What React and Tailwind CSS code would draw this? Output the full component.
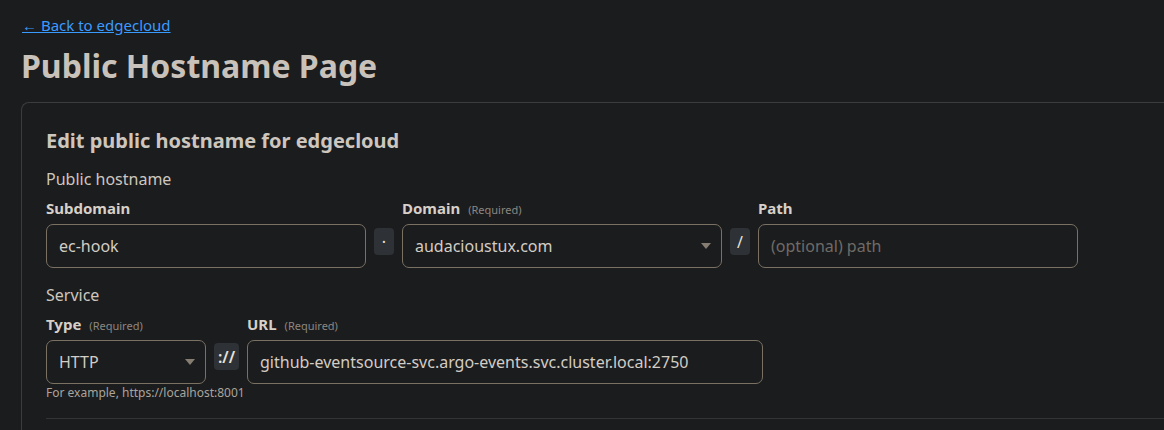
import React from 'react'

const Sep = ({ children, w = 'w-[20px]', mb = 'mb-[13px]', bold }) => (
  <div className={`${w} h-[27px] ${mb} shrink-0 rounded-[4px] bg-[#2e3135] flex items-center justify-center text-[#e6e2dc] text-[16px] ${bold ? 'font-semibold' : 'font-normal'}`}>
    {children}
  </div>
)

const Label = ({ children, required }) => (
  <div className="h-[27px] flex items-baseline gap-[8px]">
    <span className="text-[15px] font-bold text-[#d6d0c8]">{children}</span>
    {required && <span className="text-[11px] text-[#8c8780]">(Required)</span>}
  </div>
)

const Chevron = () => (
  <svg width="10" height="6" viewBox="0 0 10 6" className="absolute right-[10px] top-1/2 -translate-y-1/2">
    <path d="M0 0H10L5 6Z" fill="#857d72" />
  </svg>
)

const Box = ({ w, children, select, placeholder }) => (
  <div className={`${w} h-[44px] relative rounded-[7px] border border-[#7a7163] flex items-center px-[12px] text-[16px] ${placeholder ? 'text-[#6f6b66]' : 'text-[#d3cdc5]'}`}>
    {children}
    {select && <Chevron />}
  </div>
)

export default function App() {
  return (
    <div className="h-[430px] overflow-hidden bg-[#1b1c1e] pl-[21px] pt-[14px]" style={{ fontFamily: '"Noto Sans", sans-serif' }}>
      <a href="#" className="block ml-[1px] text-[15px] leading-[22px] text-[#3a9bff] underline">
        ← Back to edgecloud
      </a>
      <h1 className="mt-[8px] text-[32px] leading-[44px] font-bold text-[#c9c2ba]">Public Hostname Page</h1>

      <div className="mt-[14px] mr-[-24px] border-l border-t border-[#3c3c3e] rounded-tl-[8px] pl-[24px] pt-[24px]">
        <h2 className="text-[20px] leading-[28px] font-bold text-[#cdc6be]">Edit public hostname for edgecloud</h2>

        <div className="mt-[12px] text-[16px] leading-[24px] text-[#cdc7bf]">Public hostname</div>
        <div className="mt-[6px] flex items-end gap-[8px]">
          <div>
            <Label>Subdomain</Label>
            <Box w="w-[320px]">ec-hook</Box>
          </div>
          <Sep>·</Sep>
          <div>
            <Label required>Domain</Label>
            <Box w="w-[320px]" select>audacioustux.com</Box>
          </div>
          <Sep>/</Sep>
          <div>
            <Label>Path</Label>
            <Box w="w-[320px]" placeholder>(optional) path</Box>
          </div>
        </div>

        <div className="mt-[15px] text-[16px] leading-[24px] text-[#cdc7bf]">Service</div>
        <div className="mt-[6px] flex items-start gap-[8px]">
          <div className="w-[160px] shrink-0">
            <Label required>Type</Label>
            <Box w="w-[160px]" select>HTTP</Box>
            <div className="mt-[1px] whitespace-nowrap text-[12px] leading-[16px] text-[#aaa49c]">For example, https://localhost:8001</div>
          </div>
          <div className="pt-[30px]">
            <Sep w="w-[25px]" mb="mb-0" bold>://</Sep>
          </div>
          <div>
            <Label required>URL</Label>
            <Box w="w-[516px]">github-eventsource-svc.argo-events.svc.cluster.local:2750</Box>
          </div>
        </div>

        <div className="mt-[17px] border-t border-[#333437]" />
        <div className="h-[40px]" />
      </div>
    </div>
  )
}
